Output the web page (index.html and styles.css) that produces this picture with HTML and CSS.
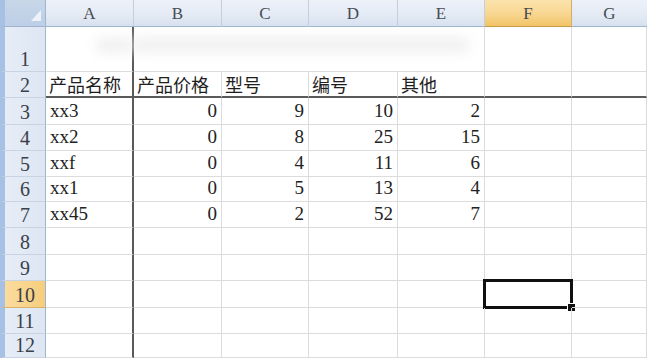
FILE: index.html
```html
<!DOCTYPE html>
<html lang="zh">
<head>
<meta charset="utf-8">
<title>Sheet</title>
<link rel="stylesheet" href="styles.css">
</head>
<body>
<div class="sheet">
  <div class="corner"><span class="tri"></span></div>
  <div class="ch">A</div>
  <div class="ch">B</div>
  <div class="ch">C</div>
  <div class="ch">D</div>
  <div class="ch">E</div>
  <div class="ch on">F</div>
  <div class="ch last">G</div>

  <div class="rh">1</div>
  <div class="c fz-r"><span class="smudge s1"></span></div>
  <div class="c merge"><span class="smudge s2"></span></div>
  <div class="c"></div>
  <div class="c"></div>

  <div class="rh">2</div>
  <div class="c fz-r fz-b cjk">产品名称</div>
  <div class="c fz-b cjk">产品价格</div>
  <div class="c fz-b cjk">型号</div>
  <div class="c fz-b cjk">编号</div>
  <div class="c fz-b cjk">其他</div>
  <div class="c fz-b"></div>
  <div class="c fz-b"></div>

  <div class="rh">3</div>
  <div class="c fz-r">xx3</div>
  <div class="c n">0</div>
  <div class="c n">9</div>
  <div class="c n">10</div>
  <div class="c n">2</div>
  <div class="c"></div>
  <div class="c"></div>

  <div class="rh">4</div>
  <div class="c fz-r">xx2</div>
  <div class="c n">0</div>
  <div class="c n">8</div>
  <div class="c n">25</div>
  <div class="c n">15</div>
  <div class="c"></div>
  <div class="c"></div>

  <div class="rh">5</div>
  <div class="c fz-r">xxf</div>
  <div class="c n">0</div>
  <div class="c n">4</div>
  <div class="c n">11</div>
  <div class="c n">6</div>
  <div class="c"></div>
  <div class="c"></div>

  <div class="rh">6</div>
  <div class="c fz-r">xx1</div>
  <div class="c n">0</div>
  <div class="c n">5</div>
  <div class="c n">13</div>
  <div class="c n">4</div>
  <div class="c"></div>
  <div class="c"></div>

  <div class="rh">7</div>
  <div class="c fz-r">xx45</div>
  <div class="c n">0</div>
  <div class="c n">2</div>
  <div class="c n">52</div>
  <div class="c n">7</div>
  <div class="c"></div>
  <div class="c"></div>

  <div class="rh">8</div>
  <div class="c fz-r"></div>
  <div class="c"></div><div class="c"></div><div class="c"></div><div class="c"></div><div class="c"></div><div class="c"></div>

  <div class="rh">9</div>
  <div class="c fz-r"></div>
  <div class="c"></div><div class="c"></div><div class="c"></div><div class="c"></div><div class="c"></div><div class="c"></div>

  <div class="rh on">10</div>
  <div class="c fz-r"></div>
  <div class="c"></div><div class="c"></div><div class="c"></div><div class="c"></div>
  <div class="c sel"><span class="selbox"></span><span class="handle"></span></div>
  <div class="c"></div>

  <div class="rh">11</div>
  <div class="c fz-r"></div>
  <div class="c"></div><div class="c"></div><div class="c"></div><div class="c"></div><div class="c"></div><div class="c"></div>

  <div class="rh">12</div>
  <div class="c fz-r"></div>
  <div class="c"></div><div class="c"></div><div class="c"></div><div class="c"></div><div class="c"></div><div class="c"></div>
</div>
</body>
</html>
```

FILE: styles.css
```css
html, body {
  margin: 0;
  padding: 0;
  background: #ffffff;
  overflow: hidden;
}

.sheet {
  display: grid;
  grid-template-columns: 46px 88px 88px 87px 89px 87px 87px 1fr;
  grid-template-rows: 27px 45px 26px 27px 26px 26px 25px 26px 27px 26px 27px 26px 24px;
  width: 647px;
  height: 358px;
  font-family: "Liberation Serif", "Noto Sans CJK SC", serif;
  font-size: 19px;
  color: #222222;
}

.corner {
  position: relative;
  background: linear-gradient(#c9d6e8, #bccfe7);
  border-left: 5px solid #a7c1e4;
  border-right: 1px solid #9fb4cf;
  border-bottom: 1px solid #9fb4cf;
  box-sizing: border-box;
}

.tri {
  position: absolute;
  right: 4px;
  bottom: 5px;
  width: 0;
  height: 0;
  border-left: 10px solid transparent;
  border-bottom: 11px solid #eef3fa;
}

.ch {
  display: flex;
  align-items: center;
  justify-content: center;
  background: linear-gradient(#edf2f9 0%, #e4ebf5 55%, #d7e1ee 100%);
  border-right: 1px solid #c3cfdf;
  border-bottom: 1px solid #9fb4cf;
  box-sizing: border-box;
  font-family: "Liberation Serif", serif;
  font-size: 17px;
  color: #474b52;
  padding-top: 2px;
}

.ch.on {
  background: linear-gradient(#fbe3ad 0%, #f8d690 55%, #f2c466 100%);
  border-right-color: #d6ae63;
  border-bottom-color: #c89a45;
}

.ch.last {
  border-right: none;
}

.rh {
  display: flex;
  align-items: flex-end;
  justify-content: center;
  background: linear-gradient(90deg, #e6edf7, #dde6f2);
  border-left: 5px solid #a7c1e4;
  border-right: 1px solid #9fb4cf;
  border-bottom: 1px solid #c8d4e4;
  box-sizing: border-box;
  font-family: "Liberation Serif", serif;
  font-size: 20px;
  line-height: 22px;
  color: #3c4048;
  padding-bottom: 1px;
}

.rh.on {
  background: linear-gradient(90deg, #fbdc9f, #f6cd7c);
  border-bottom-color: #d9b36a;
}

.c {
  position: relative;
  display: flex;
  align-items: flex-end;
  border-right: 1px solid #dadcdf;
  border-bottom: 1px solid #dadcdf;
  box-sizing: border-box;
  padding: 0 4px 2px 4px;
  line-height: 22px;
  white-space: nowrap;
}

.c.n {
  justify-content: flex-end;
}

.c.cjk {
  font-family: "Noto Sans CJK SC", sans-serif;
  font-size: 18px;
  line-height: 22px;
  padding-bottom: 1px;
  padding-left: 3px;
  color: #1e1e1e;
}

.c.fz-r {
  border-right: 2px solid #5a5a5a;
}

.c.fz-b {
  border-bottom: 2px solid #5a5a5a;
}

.c.merge {
  grid-column: span 4;
}

.smudge {
  position: absolute;
  top: 10px;
  height: 16px;
  background: #ececec;
  filter: blur(6px);
  opacity: 0.7;
}

.smudge.s1 {
  left: 50px;
  right: 0;
}

.smudge.s2 {
  left: 0;
  width: 335px;
}

.selbox {
  position: absolute;
  left: -2px;
  top: -2px;
  right: -2px;
  bottom: -2px;
  border: 3px solid #101010;
}

.handle {
  position: absolute;
  right: -5px;
  bottom: -5px;
  width: 7px;
  height: 7px;
  background: #101010;
  border: 1px solid #ffffff;
}
```
